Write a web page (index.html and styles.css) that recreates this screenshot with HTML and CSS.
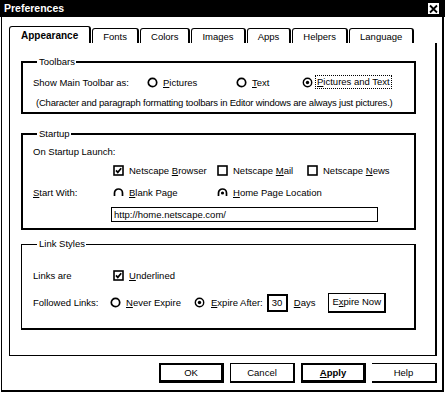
FILE: index.html
```html
<!DOCTYPE html>
<html lang="en">
<head>
  <meta charset="UTF-8">
  <title>Preferences</title>
  <link rel="stylesheet" href="styles.css">
</head>
<body>

  <div class="window">

    <!-- Title bar -->
    <div class="titlebar">
      <span class="title">Preferences</span>
      <span class="close">
        <svg width="11" height="10" viewBox="0 0 11 10"><path d="M2 1.5 L9 8.5 M9 1.5 L2 8.5" stroke="#000" stroke-width="1.8"/></svg>
      </span>
    </div>

    <div class="frame">

      <!-- Tabs -->
      <div class="tabs">
        <div class="tab active">Appearance</div>
        <div class="tab">Fonts</div>
        <div class="tab">Colors</div>
        <div class="tab">Images</div>
        <div class="tab">Apps</div>
        <div class="tab">Helpers</div>
        <div class="tab">Language</div>
      </div>

      <div class="panel">

        <!-- Toolbars -->
        <fieldset class="group toolbars">
          <legend>Toolbars</legend>
          <div class="row toolbar-row">
            <span class="col-toolbar">Show Main Toolbar as:</span>
            <span class="opt col-pictures">
              <svg width="11" height="11" viewBox="0 0 11 11"><circle cx="5.5" cy="5.5" r="4.2" fill="#fff" stroke="#000" stroke-width="1.7"/></svg>
              <span><u>P</u>ictures</span>
            </span>
            <span class="opt col-text">
              <svg width="11" height="11" viewBox="0 0 11 11"><circle cx="5.5" cy="5.5" r="4.2" fill="#fff" stroke="#000" stroke-width="1.7"/></svg>
              <span><u>T</u>ext</span>
            </span>
            <span class="opt focus-opt">
              <svg width="11" height="11" viewBox="0 0 11 11"><circle cx="5.5" cy="5.5" r="4.2" fill="#fff" stroke="#000" stroke-width="1.4"/><circle cx="5.5" cy="5.5" r="1.7" fill="#000"/></svg>
              <span class="focus"><u>P</u>ictures and Text</span>
            </span>
          </div>
          <div class="note">(Character and paragraph formatting toolbars in Editor windows are always just pictures.)</div>
        </fieldset>

        <!-- Startup -->
        <fieldset class="group startup">
          <legend>Startup</legend>
          <div class="launch">On Startup Launch:</div>
          <div class="row check-row">
            <span class="col-label"></span>
            <span class="opt col-browser">
              <svg width="11" height="11" viewBox="0 0 11 11"><rect x="1" y="1" width="9" height="9" fill="#fff" stroke="#000" stroke-width="1.6"/><path d="M3 5.4 L4.8 7.4 L8.2 3.3" fill="none" stroke="#000" stroke-width="1.7"/></svg>
              <span>Netscape <u>B</u>rowser</span>
            </span>
            <span class="opt col-mail">
              <svg width="11" height="11" viewBox="0 0 11 11"><rect x="1" y="1" width="9" height="9" fill="#fff" stroke="#000" stroke-width="1.6"/></svg>
              <span>Netscape <u>M</u>ail</span>
            </span>
            <span class="opt">
              <svg width="11" height="11" viewBox="0 0 11 11"><rect x="1" y="1" width="9" height="9" fill="#fff" stroke="#000" stroke-width="1.6"/></svg>
              <span>Netscape <u>N</u>ews</span>
            </span>
          </div>
          <div class="row start-row">
            <span class="col-label"><u>S</u>tart With:</span>
            <span class="opt col-browser">
              <svg width="11" height="11" viewBox="0 0 11 11"><path d="M1.5 9 V6 A4 4 0 0 1 9.5 6 V9" fill="none" stroke="#000" stroke-width="1.7"/></svg>
              <span><u>B</u>lank Page</span>
            </span>
            <span class="opt">
              <svg width="11" height="11" viewBox="0 0 11 11"><path d="M1.5 9 V6 A4 4 0 0 1 9.5 6 V9" fill="none" stroke="#000" stroke-width="1.7"/><circle cx="5.5" cy="6" r="1.6" fill="#000"/></svg>
              <span><u>H</u>ome Page Location</span>
            </span>
          </div>
          <div class="home-url">http://home.netscape.com/</div>
        </fieldset>

        <!-- Link Styles -->
        <fieldset class="group links">
          <legend>Link Styles</legend>
          <div class="row links-row">
            <span class="col-label">Links are</span>
            <span class="opt">
              <svg width="11" height="11" viewBox="0 0 11 11"><rect x="1" y="1" width="9" height="9" fill="#fff" stroke="#000" stroke-width="1.6"/><path d="M3 5.4 L4.8 7.4 L8.2 3.3" fill="none" stroke="#000" stroke-width="1.7"/></svg>
              <span><u>U</u>nderlined</span>
            </span>
          </div>
          <div class="row followed-row">
            <span class="col-followed">Followed Links:</span>
            <span class="opt col-never">
              <svg width="11" height="11" viewBox="0 0 11 11"><circle cx="5.5" cy="5.5" r="4.2" fill="#fff" stroke="#000" stroke-width="1.7"/></svg>
              <span><u>N</u>ever Expire</span>
            </span>
            <span class="opt expire-opt">
              <svg width="11" height="11" viewBox="0 0 11 11"><circle cx="5.5" cy="5.5" r="4.2" fill="#fff" stroke="#000" stroke-width="1.4"/><circle cx="5.5" cy="5.5" r="1.7" fill="#000"/></svg>
              <span><u>E</u>xpire After:</span>
            </span>
            <span class="days-box">30</span>
            <span class="days"><u>D</u>ays</span>
            <span class="expire-now">E<u>x</u>pire Now</span>
          </div>
        </fieldset>

      </div>

      <!-- Dialog buttons -->
      <div class="buttons">
        <span class="btn default">OK</span>
        <span class="btn">Cancel</span>
        <span class="btn apply"><u>A</u>pply</span>
        <span class="btn help">Help</span>
      </div>

    </div>
  </div>

</body>
</html>
```

FILE: styles.css
```css
* {
  margin: 0;
  padding: 0;
  box-sizing: border-box;
}

body {
  background: #fff;
  color: #000;
  font-family: 'Liberation Sans', Arial, sans-serif;
  font-size: 9.5px;
}

u {
  text-decoration: underline;
  text-underline-offset: 1px;
}

.window {
  width: 445px;
  height: 394px;
  background: #fff;
}

/* Title bar */
.titlebar {
  height: 17px;
  background: #000;
  display: flex;
  align-items: center;
  justify-content: space-between;
  padding: 0 4px 0 4px;
}

.title {
  color: #fff;
  font-weight: bold;
  font-size: 10.5px;
  line-height: 17px;
}

.close {
  width: 13px;
  height: 13px;
  background: #fff;
  border: 1px solid #000;
  display: flex;
  align-items: center;
  justify-content: center;
  margin-right: 1px;
}

.frame {
  margin: 0 1px;
  width: 443px;
  height: 375px;
  border-left: 1px solid #000;
  border-right: 2px solid #000;
  border-bottom: 2px solid #000;
  padding: 9px 0 0 7px;
}

/* Tabs */
.tabs {
  display: flex;
  align-items: flex-end;
  gap: 1px;
  height: 17px;
}

.tab {
  height: 15px;
  line-height: 15px;
  padding: 0 10px;
  border-top: 1px solid #000;
  border-left: 1px solid #000;
  border-right: 2px solid #000;
  border-radius: 3px 3px 0 0;
  white-space: nowrap;
}

.tab.active {
  height: 17px;
  padding: 1px 11px 0 11px;
  font-weight: bold;
  font-size: 10px;
}

.panel {
  width: 428px;
  height: 313px;
  border-left: 1px solid #000;
  border-right: 2px solid #000;
  border-bottom: 1px solid #000;
  padding: 13px 19px 0 11px;
}

/* Group boxes */
.group {
  border: 2px solid #000;
  padding: 0 0 0 10px;
  min-inline-size: 0;
}

.group legend {
  line-height: 12px;
  margin-left: 4px;
  padding: 0 1px 0 2px;
}

.row {
  display: flex;
  align-items: center;
  white-space: nowrap;
}

.opt {
  display: flex;
  align-items: center;
  gap: 5px;
}

.opt svg {
  flex-shrink: 0;
}

/* Toolbars */
.toolbars {
  padding-top: 2px;
}

.toolbar-row {
  height: 24px;
}

.col-toolbar {
  width: 114px;
}

.col-pictures {
  width: 89px;
}

.col-text {
  width: 66px;
}

.focus-opt {
  gap: 2px;
}

.focus {
  border: 1px dotted #000;
  padding: 0 1px;
  line-height: 12px;
}

.note {
  height: 18px;
  line-height: 18px;
  padding-left: 3px;
  letter-spacing: -0.2px;
  white-space: nowrap;
}

/* Startup */
.startup {
  margin-top: 14px;
  padding-top: 4px;
  padding-bottom: 6px;
}

.launch {
  height: 16px;
  line-height: 16px;
}

.check-row {
  height: 20px;
}

.start-row {
  height: 24px;
}

.col-label {
  width: 80px;
}

.col-browser {
  width: 104px;
}

.col-mail {
  width: 90px;
}

.home-url {
  margin: 3px 0 0 78px;
  width: 267px;
  height: 15px;
  line-height: 13px;
  border: 1px solid #000;
  border-top-width: 1.5px;
  padding-left: 2px;
}

/* Link Styles */
.links {
  margin-top: 8px;
  border-width: 1px 2px 2px 1px;
  padding: 16px 0 16px 11px;
}

.links-row {
  height: 18px;
}

.followed-row {
  margin-top: 9px;
  height: 19px;
}

.col-followed {
  width: 77px;
}

.col-never {
  width: 84px;
}

.expire-opt {
  gap: 6px;
}

.days-box {
  margin-left: 4px;
  width: 21px;
  height: 18px;
  line-height: 14px;
  border: 2px solid #000;
  padding-left: 3px;
}

.days {
  margin-left: 6px;
}

.expire-now {
  margin-left: 13px;
  height: 20px;
  line-height: 16px;
  border: 1px solid #000;
  border-right-width: 2px;
  border-bottom-width: 2px;
  padding: 0 3px;
}

/* Dialog buttons */
.buttons {
  display: flex;
  justify-content: flex-end;
  gap: 6px;
  margin-top: 7px;
  width: 428px;
}

.btn {
  width: 65px;
  height: 20px;
  line-height: 17px;
  text-align: center;
  border: 1px solid #000;
  border-right-width: 2px;
  border-bottom-width: 2px;
}

.btn.default,
.btn.apply {
  border-width: 2px;
  border-right-width: 3px;
  border-bottom-width: 3px;
  line-height: 15px;
}

.btn.apply {
  font-weight: bold;
}

.btn.help {
  border-left: none;
}
```
